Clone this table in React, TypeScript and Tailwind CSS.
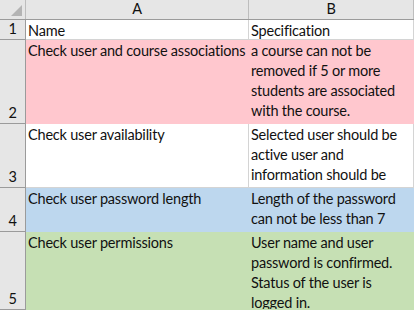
const ROWS = [
  {
    num: 1,
    h: "h-[20px]",
    fill: "bg-white",
    line: "border-[#d4d4d4]",
    name: ["Name"],
    spec: ["Specification"],
  },
  {
    num: 2,
    h: "h-[84px]",
    fill: "bg-[#ffc7ce]",
    line: "border-[#ffc7ce]",
    name: ["Check user and course associations"],
    spec: ["a course can not be", "removed if 5 or more", "students are associated", "with the course."],
  },
  {
    num: 3,
    h: "h-[64px]",
    fill: "bg-white",
    line: "border-[#d4d4d4]",
    name: ["Check user availability"],
    spec: ["Selected user should be", "active user and", "information should be"],
  },
  {
    num: 4,
    h: "h-[44px]",
    fill: "bg-[#bdd7ee]",
    line: "border-[#bdd7ee]",
    name: ["Check user password length"],
    spec: ["Length of the password", "can not be less than 7"],
  },
  {
    num: 5,
    h: "h-[78px]",
    fill: "bg-[#c6e0b4]",
    line: "border-[#c6e0b4]",
    name: ["Check user permissions"],
    spec: ["User name and user", "password is confirmed.", "Status of the user is", "logged in."],
  },
];

function Lines({ lines }: { lines: string[] }) {
  return (
    <div className="pl-[2px] pt-[1px]">
      {lines.map((l) => (
        <div key={l} className="h-[20px] leading-[20px] whitespace-nowrap">
          {l}
        </div>
      ))}
    </div>
  );
}

export default function App() {
  return (
    <div
      className="w-[414px] h-[310px] overflow-hidden bg-white text-[14.5px] tracking-[-0.2px] text-[#111]"
      style={{ fontFamily: "Lato, 'Open Sans', sans-serif" }}
    >
      {/* column headers */}
      <div className="flex h-[20px] bg-[#e6e6e6] border-b border-[#9b9b9b]">
        <div className="relative w-[26px] border-r border-[#bdbdbd]">
          <svg className="absolute left-0 top-0" width="25" height="19" viewBox="0 0 25 19">
            <polygon points="11,16 22,16 22,5" fill="#b4b4b4" />
          </svg>
        </div>
        <div className="w-[223px] border-r border-[#bdbdbd] flex items-center justify-center leading-none">
          A
        </div>
        <div className="w-[165px] border-r border-[#bdbdbd] flex items-center justify-center leading-none">
          B
        </div>
      </div>

      {ROWS.map((r) => (
        <div key={r.num} className={`flex ${r.h}`}>
          <div className="w-[26px] shrink-0 bg-[#e6e6e6] border-r border-b border-[#9b9b9b] flex items-end justify-center leading-[20px]">
            {r.num}
          </div>
          <div className={`w-[223px] shrink-0 overflow-hidden border-r border-b ${r.fill} ${r.line}`}>
            <Lines lines={r.name} />
          </div>
          <div className={`w-[165px] shrink-0 overflow-hidden border-r border-b ${r.fill} ${r.line}`}>
            <Lines lines={r.spec} />
          </div>
        </div>
      ))}
    </div>
  );
}
